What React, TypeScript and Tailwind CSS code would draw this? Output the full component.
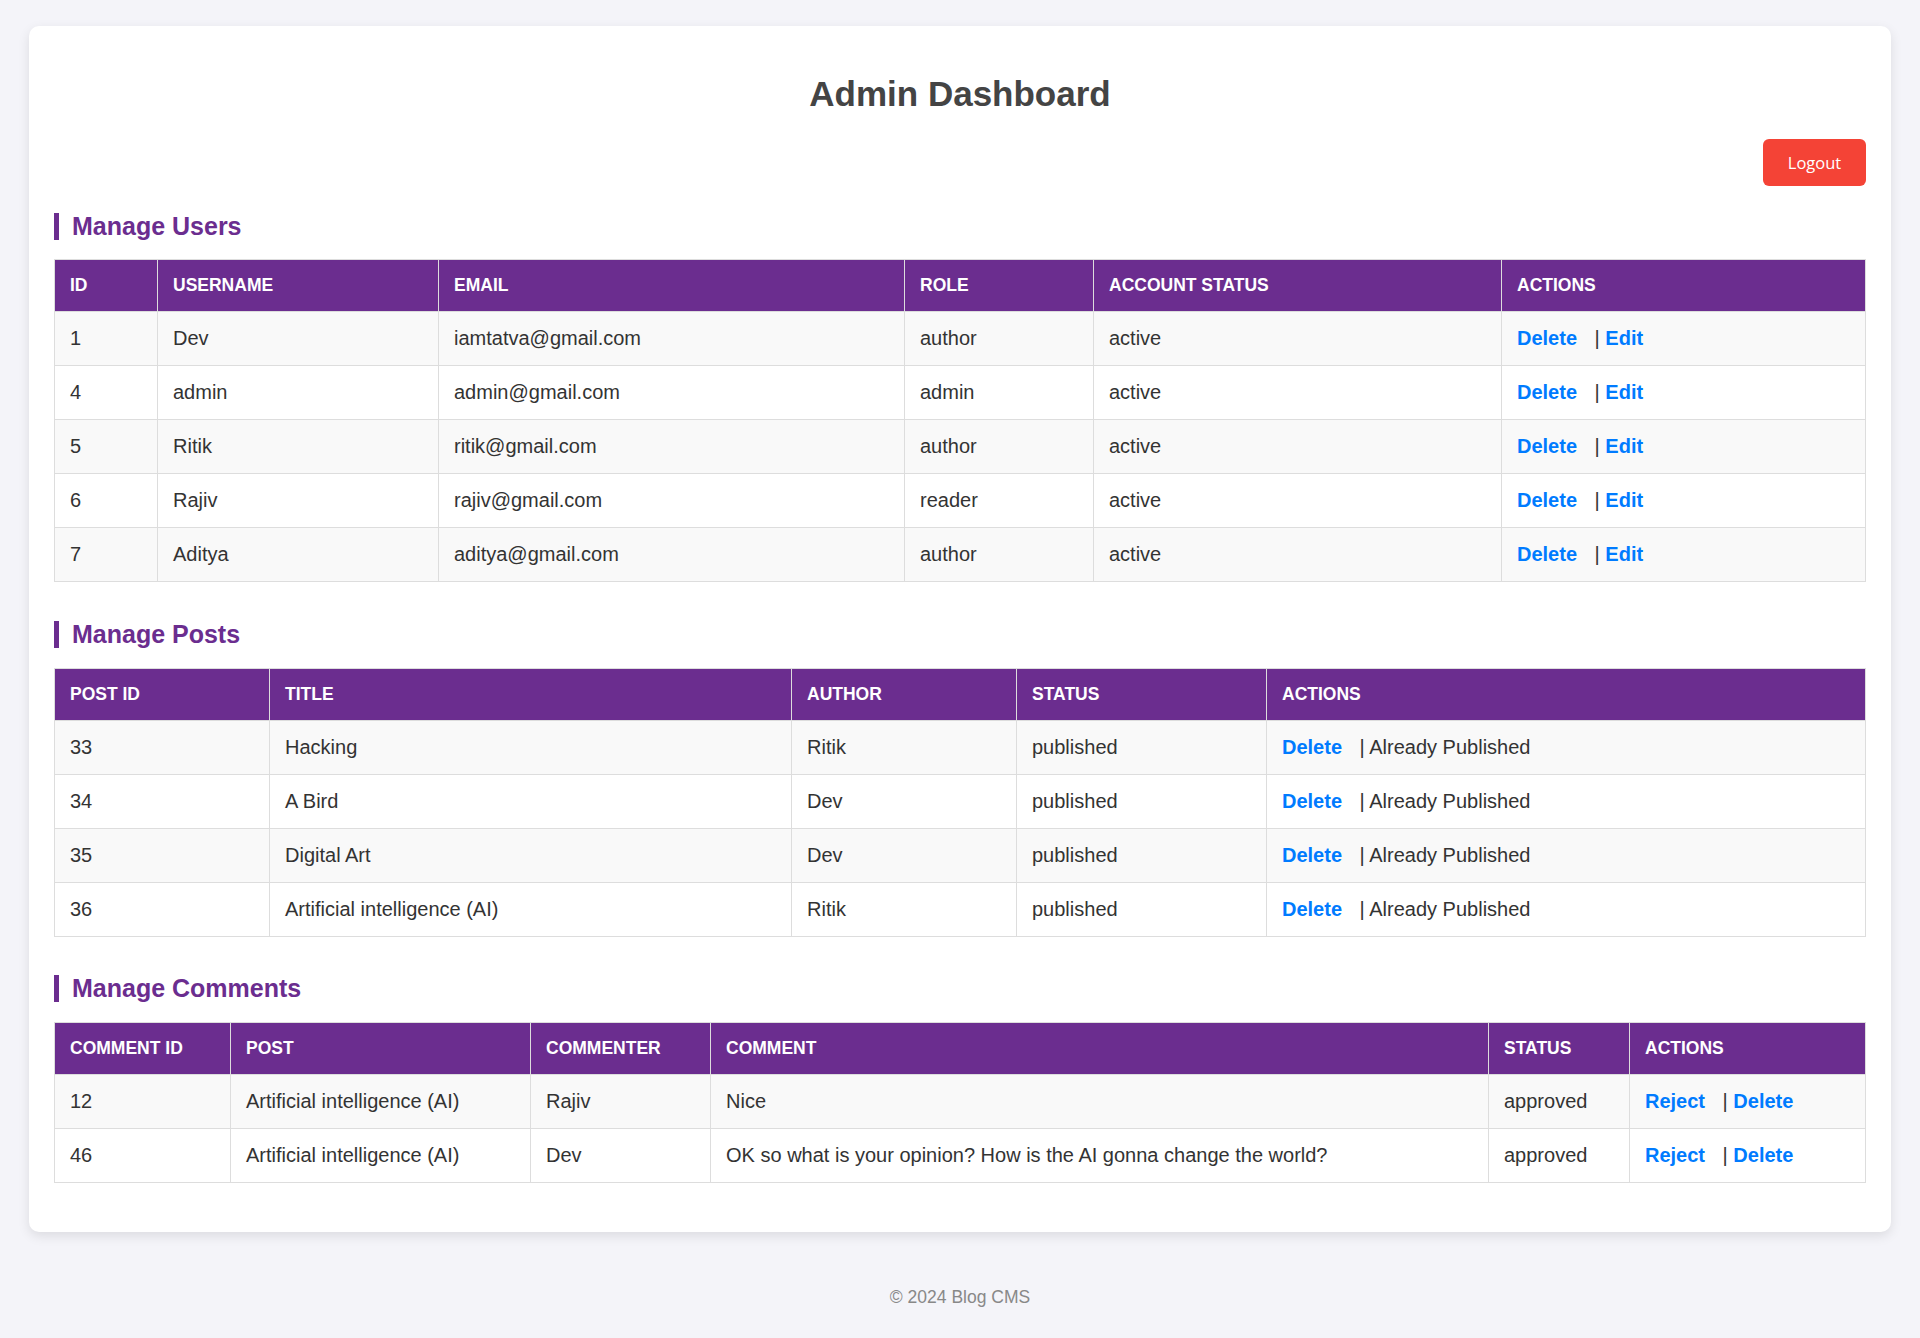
// Admin dashboard - users, posts and comments tables
import React from 'react';

interface Column {
  label: string;
  width?: string;
}

const userCols: Column[] = [
  { label: 'ID', width: 'w-[103px]' },
  { label: 'Username', width: 'w-[281px]' },
  { label: 'Email', width: 'w-[466px]' },
  { label: 'Role', width: 'w-[189px]' },
  { label: 'Account Status', width: 'w-[408px]' },
  { label: 'Actions' },
];

const users = [
  { id: 1, username: 'Dev', email: 'iamtatva@gmail.com', role: 'author', status: 'active' },
  { id: 4, username: 'admin', email: 'admin@gmail.com', role: 'admin', status: 'active' },
  { id: 5, username: 'Ritik', email: 'ritik@gmail.com', role: 'author', status: 'active' },
  { id: 6, username: 'Rajiv', email: 'rajiv@gmail.com', role: 'reader', status: 'active' },
  { id: 7, username: 'Aditya', email: 'aditya@gmail.com', role: 'author', status: 'active' },
];

const postCols: Column[] = [
  { label: 'Post ID', width: 'w-[215px]' },
  { label: 'Title', width: 'w-[522px]' },
  { label: 'Author', width: 'w-[225px]' },
  { label: 'Status', width: 'w-[250px]' },
  { label: 'Actions' },
];

const posts = [
  { id: 33, title: 'Hacking', author: 'Ritik', status: 'published' },
  { id: 34, title: 'A Bird', author: 'Dev', status: 'published' },
  { id: 35, title: 'Digital Art', author: 'Dev', status: 'published' },
  { id: 36, title: 'Artificial intelligence (AI)', author: 'Ritik', status: 'published' },
];

const commentCols: Column[] = [
  { label: 'Comment ID', width: 'w-[176px]' },
  { label: 'Post', width: 'w-[300px]' },
  { label: 'Commenter', width: 'w-[180px]' },
  { label: 'Comment', width: 'w-[778px]' },
  { label: 'Status', width: 'w-[141px]' },
  { label: 'Actions' },
];

const comments = [
  { id: 12, post: 'Artificial intelligence (AI)', commenter: 'Rajiv', text: 'Nice', status: 'approved' },
  {
    id: 46,
    post: 'Artificial intelligence (AI)',
    commenter: 'Dev',
    text: 'OK so what is your opinion? How is the AI gonna change the world?',
    status: 'approved',
  },
];

const SectionTitle: React.FC<{ title: string; spacing: string }> = ({ title, spacing }) => (
  <h2
    className={`${spacing} border-l-[5px] border-[#6b2d8f] pl-[13px] text-[25px] leading-[27px] font-bold text-[#6b2d8f]`}
  >
    {title}
  </h2>
);

const Table: React.FC<{ cols: Column[]; children: React.ReactNode }> = ({ cols, children }) => (
  <table className="w-full table-fixed border-collapse border border-[#ddd]">
    <colgroup>
      {cols.map((c) => (
        <col key={c.label} className={c.width} />
      ))}
    </colgroup>
    <thead>
      <tr>
        {cols.map((c) => (
          <th
            key={c.label}
            className="border border-[#ddd] bg-[#6b2d8f] px-[15px] py-[15px] text-left text-[17.5px] leading-[21px] font-bold uppercase text-white"
          >
            {c.label}
          </th>
        ))}
      </tr>
    </thead>
    <tbody>{children}</tbody>
  </table>
);

const rowBg = (i: number) => (i % 2 === 0 ? 'bg-[#f9f9f9]' : 'bg-white');
const td = 'border border-[#ddd] px-[15px] py-[15px] text-[20px] leading-[23px] text-[#333] whitespace-nowrap';
const link = 'font-bold text-[#007bff]';

export default function App() {
  return (
    <div className="min-h-screen bg-[#f4f4f9] px-[29px] pt-[26px] pb-[31px] font-['Liberation_Sans',Arial,sans-serif]">
      <div className="rounded-[10px] bg-white px-[25px] pt-[48px] pb-[49px] shadow-[0_4px_12px_rgba(0,0,0,0.1)]">
        <h1 className="text-center text-[35px] leading-[40px] font-bold text-[#444]">Admin Dashboard</h1>

        <div className="mt-[25px] flex justify-end">
          <button className="h-[47px] w-[103px] rounded-[6px] bg-[#f44336] pt-[2px] font-['Open_Sans',sans-serif] text-[16.5px] text-white">
            Logout
          </button>
        </div>

        {/* users */}
        <SectionTitle title="Manage Users" spacing="mt-[27px] mb-[19px]" />
        <Table cols={userCols}>
          {users.map((u, i) => (
            <tr key={u.id} className={rowBg(i)}>
              <td className={td}>{u.id}</td>
              <td className={td}>{u.username}</td>
              <td className={td}>{u.email}</td>
              <td className={td}>{u.role}</td>
              <td className={td}>{u.status}</td>
              <td className={td}>
                <a className={`${link} mr-[12px]`}>Delete</a> | <a className={link}>Edit</a>
              </td>
            </tr>
          ))}
        </Table>

        {/* posts */}
        <SectionTitle title="Manage Posts" spacing="mt-[39px] mb-[20px]" />
        <Table cols={postCols}>
          {posts.map((p, i) => (
            <tr key={p.id} className={rowBg(i)}>
              <td className={td}>{p.id}</td>
              <td className={td}>{p.title}</td>
              <td className={td}>{p.author}</td>
              <td className={td}>{p.status}</td>
              <td className={td}>
                <a className={`${link} mr-[12px]`}>Delete</a> | Already Published
              </td>
            </tr>
          ))}
        </Table>

        {/* comments */}
        <SectionTitle title="Manage Comments" spacing="mt-[38px] mb-[20px]" />
        <Table cols={commentCols}>
          {comments.map((c, i) => (
            <tr key={c.id} className={rowBg(i)}>
              <td className={td}>{c.id}</td>
              <td className={td}>{c.post}</td>
              <td className={td}>{c.commenter}</td>
              <td className={td}>{c.text}</td>
              <td className={td}>{c.status}</td>
              <td className={td}>
                <a className={`${link} mr-[12px]`}>Reject</a> | <a className={link}>Delete</a>
              </td>
            </tr>
          ))}
        </Table>
      </div>

      <footer className="mt-[55px] text-center text-[17.5px] leading-[20px] text-[#888]">© 2024 Blog CMS</footer>
    </div>
  );
}
